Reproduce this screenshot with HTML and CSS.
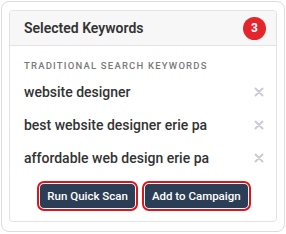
FILE: index.html
```html
<!DOCTYPE html>
<html>
<head>
<meta charset="utf-8">
<link rel="stylesheet" href="styles.css">
</head>
<body>
<div class="frame">
  <div class="card">
    <div class="card-header">
      <span class="title">Selected Keywords</span>
      <span class="badge">3</span>
    </div>
    <div class="card-body">
      <div class="section-label">Traditional Search Keywords</div>
      <ul class="kw-list">
        <li class="kw"><span class="kw-text">website designer</span><span class="kw-remove"><svg viewBox="0 0 10 10" width="10" height="10"><path d="M1.5 1.5 L8.5 8.5 M8.5 1.5 L1.5 8.5" stroke="#c9cdd3" stroke-width="2" stroke-linecap="round"/></svg></span></li>
        <li class="kw"><span class="kw-text">best website designer erie pa</span><span class="kw-remove"><svg viewBox="0 0 10 10" width="10" height="10"><path d="M1.5 1.5 L8.5 8.5 M8.5 1.5 L1.5 8.5" stroke="#c9cdd3" stroke-width="2" stroke-linecap="round"/></svg></span></li>
        <li class="kw"><span class="kw-text">affordable web design erie pa</span><span class="kw-remove"><svg viewBox="0 0 10 10" width="10" height="10"><path d="M1.5 1.5 L8.5 8.5 M8.5 1.5 L1.5 8.5" stroke="#c9cdd3" stroke-width="2" stroke-linecap="round"/></svg></span></li>
      </ul>
      <div class="actions">
        <button class="btn">Run Quick Scan</button>
        <button class="btn">Add to Campaign</button>
      </div>
    </div>
  </div>
</div>
</body>
</html>
```
FILE: styles.css
```css
* { box-sizing: border-box; }
html, body { margin: 0; padding: 0; background: #ffffff; }
body { font-family: Roboto, "Liberation Sans", Arial, sans-serif; color: #333333; }
.frame {
  margin: 1px 0 0 1px;
  width: 284px;
  height: 231px;
  border: 1px solid #dcdcdc;
  border-radius: 8px;
  padding: 8px 7px 9px 7px;
}
.card {
  border: 1px solid #e3e3e3;
  border-radius: 4px;
  height: 212px;
  display: flex;
  flex-direction: column;
  overflow: hidden;
}
.card-header {
  height: 35px;
  background: #f7f7f7;
  border-bottom: 1px solid #e3e3e3;
  display: flex;
  align-items: center;
  justify-content: space-between;
  padding: 0 10px 0 14px;
}
.title { font-size: 14px; font-weight: 600; color: #333333; }
.badge {
  width: 23px; height: 23px;
  border-radius: 50%;
  background: #e3262b;
  color: #ffffff;
  font-size: 12px;
  font-weight: 700;
  display: flex; align-items: center; justify-content: center;
}
.card-body { padding: 14px 12px 0 14px; display: flex; flex-direction: column; }
.section-label {
  font-size: 9.5px;
  font-weight: 500;
  letter-spacing: 1.2px;
  text-transform: uppercase;
  color: #7a7a7a;
  line-height: 12px;
}
.kw-list { list-style: none; margin: 3px 0 0 0; padding: 0; }
.kw {
  display: flex; align-items: center; justify-content: space-between;
  height: 33px;
}
.kw-text { font-size: 14px; font-weight: 500; color: #333333; }
.kw-remove { display: flex; }
.actions { display: flex; justify-content: center; gap: 10px; margin-top: 10px; }
.btn {
  font-family: inherit;
  background: #2c3e55;
  color: #ffffff;
  border: none;
  border-radius: 4px;
  font-size: 11.5px;
  font-weight: 500;
  height: 24px;
  padding: 0 7px;
  outline: 2px solid #e0151b;
  outline-offset: 1px;
}
```
